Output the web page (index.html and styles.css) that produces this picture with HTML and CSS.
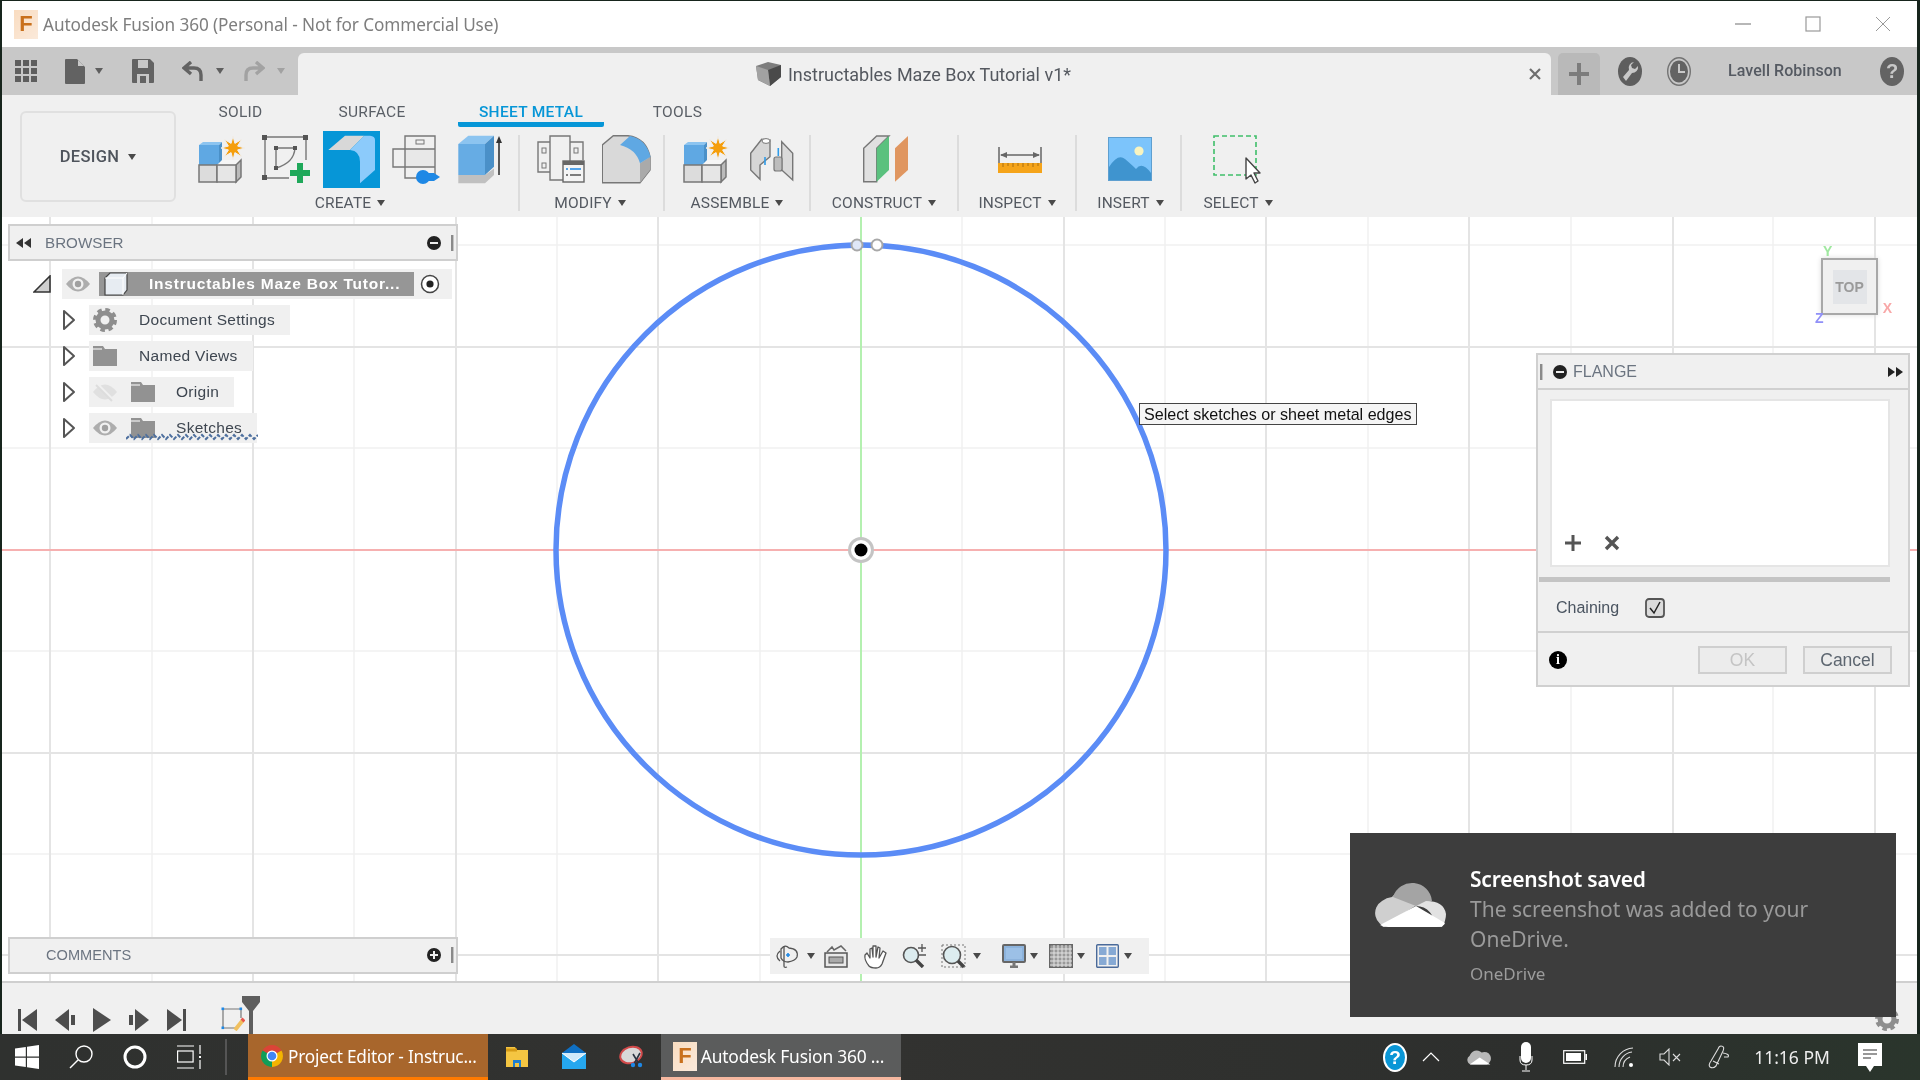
FILE: index.html
```html
<!DOCTYPE html>
<html lang="en">
<head>
<meta charset="utf-8">
<title>Autodesk Fusion 360</title>
<link rel="stylesheet" href="styles.css">
</head>
<body>
<svg class="defs" width="0" height="0">
  <defs>
    <symbol id="newcomp" viewBox="0 0 50 50">
      <polygon points="1,10 5,7 24,7 21,10" fill="#8cc4f0"/>
      <rect x="1" y="10" width="20" height="20" fill="#5fa8e3"/>
      <polygon points="21,10 24,7 24,26 21,30" fill="#4a90c8"/>
      <rect x="1" y="30" width="18" height="17" fill="#dcdcdc" stroke="#777" stroke-width="1.5"/>
      <polygon points="19,30 24,25 43,25 38,30" fill="#f6f6f6"/>
      <polygon points="38,30 43,25 43,42 38,47" fill="#bbb" stroke="#777" stroke-width="1.5"/>
      <rect x="19" y="30" width="19" height="17" fill="#e6e6e6" stroke="#777" stroke-width="1.5"/>
      <polygon points="35,1 36.9,8.4 43.5,4.5 39.6,11.1 47,13 39.6,14.9 43.5,21.5 36.9,17.6 35,25 33.1,17.6 26.5,21.5 30.4,14.9 23,13 30.4,11.1 26.5,4.5 33.1,8.4" fill="#f59e0b" stroke="#f0f0f0" stroke-width="1"/>
    </symbol>
    <symbol id="eye" viewBox="0 0 24 24">
      <path d="M0 12Q12 -3 24 12Q12 27 0 12Z" fill="#adadad"/>
      <circle cx="12" cy="12" r="5.5" fill="#f0f0f0"/>
      <circle cx="12" cy="12" r="3.2" fill="#a0a0a0"/>
    </symbol>
    <symbol id="folder" viewBox="0 0 24 24">
      <path d="M0 2H10L12 5H24V22H0Z" fill="#929292"/>
      <path d="M0 5H9" stroke="#f0f0f0" stroke-width="1.2"/>
    </symbol>
    <symbol id="gear" viewBox="0 0 24 24">
      <circle cx="12" cy="12" r="7" fill="none" stroke="#8e8e8e" stroke-width="5"/>
      <circle cx="12" cy="12" r="10" fill="none" stroke="#8e8e8e" stroke-width="4" stroke-dasharray="4.4 3.45"/>
    </symbol>
    <symbol id="tree-arrow" viewBox="0 0 14 22">
      <path d="M2 2L12 11L2 20Z" fill="#fff" stroke="#555" stroke-width="2" stroke-linejoin="round"/>
    </symbol>
  </defs>
</svg>

<div class="screen">
  <div class="app">
    <header class="titlebar">
      <span class="app-badge">F</span>
      <span class="app-title">Autodesk Fusion 360 (Personal - Not for Commercial Use)</span>
      <div class="win-controls">
        <svg width="16" height="16" viewBox="0 0 16 16"><path d="M0 8H16" stroke="#999" stroke-width="1.4"/></svg>
        <svg width="16" height="16" viewBox="0 0 16 16"><rect x="1" y="1" width="14" height="14" fill="none" stroke="#999" stroke-width="1.2"/></svg>
        <svg width="16" height="16" viewBox="0 0 16 16"><path d="M1 1L15 15M15 1L1 15" stroke="#999" stroke-width="1"/></svg>
      </div>
    </header>

    <div class="tabbar">
      <div class="qat">
        <svg width="22" height="22" viewBox="0 0 22 22" fill="#5e5e5e"><rect width="6" height="6"/><rect x="8" width="6" height="6"/><rect x="16" width="6" height="6"/><rect y="8" width="6" height="6"/><rect x="8" y="8" width="6" height="6"/><rect x="16" y="8" width="6" height="6"/><rect y="16" width="6" height="6"/><rect x="8" y="16" width="6" height="6"/><rect x="16" y="16" width="6" height="6"/></svg>
        <svg width="20" height="25" viewBox="0 0 20 25"><path d="M0 1a1 1 0 0 1 1-1H12L20 8V24a1 1 0 0 1-1 1H1a1 1 0 0 1-1-1Z" fill="#626262"/><path d="M13 1V7H19" fill="#c8c8c8"/></svg>
        <span class="caret"></span>
        <svg width="22" height="24" viewBox="0 0 22 24"><path d="M1 0H18L22 4V23a1 1 0 0 1-1 1H1a1 1 0 0 1-1-1V1a1 1 0 0 1 1-1Z" fill="#636363"/><rect x="6" y="1" width="10" height="8" fill="#c8c8c8"/><rect x="5" y="15" width="12" height="9" fill="#c8c8c8"/><rect x="8" y="17" width="6" height="7" fill="#636363"/></svg>
        <svg width="21" height="20" viewBox="0 0 21 20"><path d="M9 1L2 7L9 13M2 7H12Q19 7 19 14V20" fill="none" stroke="#636363" stroke-width="3.4"/></svg>
        <span class="caret"></span>
        <svg width="21" height="20" viewBox="0 0 21 20"><path d="M12 1L19 7L12 13M19 7H9Q2 7 2 14V20" fill="none" stroke="#a2a2a2" stroke-width="3.4"/></svg>
        <span class="caret caret-dim"></span>
      </div>
      <div class="doc-tab">
        <div class="doc-title">
          <svg width="25" height="24" viewBox="0 0 25 24"><path d="M0 4L12 0L25 3V15L14 24L2 18Z" fill="#7d7d7d"/><path d="M12 8L25 3V15L14 24Z" fill="#4a4a4a"/><path d="M0 4L12 8L14 24L2 18Z" fill="#a2a2a2"/></svg>
          <span>Instructables Maze Box Tutorial v1*</span>
        </div>
        <svg class="doc-close" width="12" height="12" viewBox="0 0 12 12"><path d="M1 1L11 11M11 1L1 11" stroke="#6e6e6e" stroke-width="2.2"/></svg>
      </div>
      <div class="plus-tab"><svg width="20" height="24" viewBox="0 0 20 24"><path d="M10 1V23M0 12H20" stroke="#7c7c7c" stroke-width="4"/></svg></div>
      <svg class="wrench" width="24" height="29" viewBox="0 0 24 29"><ellipse cx="12" cy="14.5" rx="12" ry="14.5" fill="#5e5e5e"/><path d="M16 5a6 6 0 0 0-5 8L5 20l3 4 6-8a6 6 0 0 0 6-7l-3 3-3-1-1-3 3-3Z" fill="#c8c8c8"/></svg>
      <svg class="clock" width="24" height="29" viewBox="0 0 24 29"><ellipse cx="12" cy="14.5" rx="11.3" ry="13.8" fill="none" stroke="#737373" stroke-width="1.4"/><ellipse cx="12" cy="14.5" rx="9" ry="11" fill="#636363"/><path d="M12 7V15H18" fill="none" stroke="#c8c8c8" stroke-width="2"/></svg>
      <span class="user-name">Lavell Robinson</span>
      <span class="help-badge">?</span>
    </div>

    <div class="toolbar">
      <div class="design-btn"><span>DESIGN</span><span class="caret"></span></div>
      <div class="ribbon">
        <div class="tabs">
          <span class="tab tab-solid">SOLID</span>
          <span class="tab tab-surface">SURFACE</span>
          <span class="tab tab-sheet">SHEET METAL</span>
          <span class="tab tab-tools">TOOLS</span>
        </div>
        <div class="groups">
          <section class="group group-create">
            <div class="icons icons-create">
              <svg width="50" height="50"><use href="#newcomp"/></svg>
              <svg width="50" height="50" viewBox="0 0 50 50">
                <path d="M3 43V2H44V25M3 43H27" fill="none" stroke="#777" stroke-width="1.4"/>
                <path d="M14 33V13H33Q32 28 14 33" fill="none" stroke="#777" stroke-width="1.4"/>
                <g fill="#555"><rect x="0" y="0" width="5" height="5"/><rect x="41" y="0" width="5" height="5"/><rect x="0" y="40" width="5" height="5"/><rect x="12" y="11" width="4" height="4"/><rect x="31" y="11" width="4" height="4"/><rect x="12" y="31" width="4" height="4"/></g>
                <path d="M38 28V48M28 38H48" stroke="#1fa85a" stroke-width="6"/>
              </svg>
              <svg class="active-icon" width="57" height="57" viewBox="0 0 57 57">
                <rect width="57" height="57" fill="#0696d7"/>
                <polygon points="5.3,19 22,4.7 41.3,4.7 27,19" fill="#d8d8d8"/>
                <path d="M27 19L41.3 4.7H47Q52 5 52 9V39L37 52.3V30.7Q37 20 27 19Z" fill="#8ccbfb"/>
              </svg>
              <svg width="50" height="50" viewBox="0 0 50 50">
                <rect x="13" y="14" width="30" height="18" fill="#e8e8e8"/>
                <path d="M13 1H43V43H13ZM13 14H43M13 32H43M13 14H1V32H13" fill="none" stroke="#777" stroke-width="1.4"/>
                <rect x="24" y="5" width="8" height="4" fill="none" stroke="#777" stroke-width="1"/>
                <circle cx="31" cy="42" r="7" fill="#1e88e5"/>
                <polygon points="36,38 42,38 48,42 42,46 36,46" fill="#1e88e5"/>
              </svg>
              <svg width="50" height="50" viewBox="0 0 50 50">
                <polygon points="0.3,9 10.3,0.7 36,0.7 27,9" fill="#8cc4f0"/>
                <rect x="0.3" y="9" width="27" height="31" fill="#66ace4"/>
                <polygon points="27,9 36,0.7 36,31.7 27,40" fill="#4a90c8"/>
                <polygon points="0.3,40 27,40 36,33.5 36,40 27,48.3 0.3,48.3" fill="#c0c0c0"/>
                <path d="M41 40V6" stroke="#333" stroke-width="1.6"/><polygon points="41,1 38,8 44,8" fill="#333"/>
              </svg>
            </div>
            <div class="group-label">CREATE<span class="caret"></span></div>
          </section>
          <section class="group group-modify">
            <div class="icons icons-modify">
              <svg width="50" height="50" viewBox="0 0 50 50">
                <path d="M13 1H33V45H13ZM13 7H1V37H13M33 7H46V25" fill="none" stroke="#777" stroke-width="1.4"/>
                <g fill="none" stroke="#777"><rect x="5" y="13" width="4" height="5"/><rect x="5" y="28" width="4" height="5"/><rect x="37" y="13" width="4" height="5"/></g>
                <rect x="26" y="26" width="21" height="21" fill="#f4f4f4" stroke="#666" stroke-width="1.4"/>
                <rect x="26" y="26" width="21" height="4" fill="#666"/>
                <path d="M29 34H31M33 34H44" stroke="#1e88e5" stroke-width="1.6"/><path d="M29 40H31M33 40H44" stroke="#555" stroke-width="1.4"/>
              </svg>
              <svg width="50" height="50" viewBox="0 0 50 50">
                <path d="M0.3 10L11.3 0.7H26Q44 3 48 21.7V35L38 47.7H0.3Z" fill="#d9d9d9" stroke="#777" stroke-width="1.4"/>
                <path d="M38 28.3L48 21.7V35L38 47.7Z" fill="#aaa"/>
                <path d="M18 10L28 1Q44 4 48.5 21.7L38 28.3Q34 14 18 10Z" fill="#5fa8e3"/>
              </svg>
            </div>
            <div class="group-label">MODIFY<span class="caret"></span></div>
          </section>
          <section class="group group-assemble">
            <div class="icons icons-assemble">
              <svg width="50" height="50"><use href="#newcomp"/></svg>
              <svg width="44" height="50" viewBox="0 0 44 50">
                <path d="M0.7 18.3L11.7 4.3L20 5V21.7L10 30V44.3L0.7 35Z" fill="#d6d6d6" stroke="#777" stroke-width="1.4"/>
                <ellipse cx="16" cy="6" rx="4" ry="2.4" fill="#fff" stroke="#777"/>
                <path d="M31.7 6.7L42.7 18.3V45L31.7 35Z" fill="#dadada" stroke="#777" stroke-width="1.4"/>
                <rect x="24" y="22" width="8" height="14" rx="2" fill="#bdbdbd" stroke="#777" stroke-width="1.2"/>
                <path d="M15 22V30M28.3 13V21" stroke="#2f9be8" stroke-width="1.6"/>
              </svg>
            </div>
            <div class="group-label">ASSEMBLE<span class="caret"></span></div>
          </section>
          <section class="group group-construct">
            <div class="icons icons-construct">
              <svg width="48" height="50" viewBox="0 0 48 50">
                <path d="M1.7 13.3L14.7 1H27L14.7 13.3V46.7H1.7Z" fill="#e0e0e0" stroke="#777" stroke-width="1.4"/>
                <polygon points="14.7,13.3 27,1 27,35 14.7,46.7" fill="#5ac17e"/>
                <polygon points="33,13.3 46,1 46,35 33,46.7" fill="#e09660"/>
              </svg>
            </div>
            <div class="group-label">CONSTRUCT<span class="caret"></span></div>
          </section>
          <section class="group group-inspect">
            <div class="icons icons-inspect">
              <svg width="44" height="26" viewBox="0 0 44 26">
                <path d="M1 0V16M43 0V16M3 8H41" stroke="#666" stroke-width="1.5"/>
                <polygon points="2,8 9,5 9,11" fill="#666"/><polygon points="42,8 35,5 35,11" fill="#666"/>
                <rect y="16" width="44" height="10" fill="#f5a41a"/>
                <path d="M5 16v4M10 16v3M15 16v4M20 16v3M25 16v4M30 16v3M35 16v4M40 16v3" stroke="#a86f10" stroke-width="1"/>
              </svg>
            </div>
            <div class="group-label">INSPECT<span class="caret"></span></div>
          </section>
          <section class="group group-insert">
            <div class="icons icons-insert">
              <svg width="44" height="44" viewBox="0 0 44 44">
                <rect x="0.5" y="0.5" width="43" height="43" fill="#7cc4fb" stroke="#5e9fd0"/>
                <circle cx="31" cy="14" r="4.6" fill="#f8f4c0"/>
                <path d="M1 30Q10 16 17 22T28 32Q34 24 43 36V43H1Z" fill="#3f94cf"/>
              </svg>
            </div>
            <div class="group-label">INSERT<span class="caret"></span></div>
          </section>
          <section class="group group-select">
            <div class="icons icons-select">
              <svg width="50" height="50" viewBox="0 0 50 50">
                <rect x="1" y="1" width="42" height="39" fill="none" stroke="#3fbf6a" stroke-width="1.6" stroke-dasharray="5 3"/>
                <path d="M33 23V44L38 40L42 48L45 46L41 38H47Z" fill="#fff" stroke="#444" stroke-width="1.4" stroke-linejoin="round"/>
              </svg>
            </div>
            <div class="group-label">SELECT<span class="caret"></span></div>
          </section>
        </div>
      </div>
    </div>

    <main class="canvas">
      <svg class="grid" width="1915" height="764" viewBox="2 217 1915 764">
        <g stroke="#f1f1f1" stroke-width="1.5">
          <path d="M152 217V981M354 217V981M557 217V981M760 217V981M962 217V981M1165 217V981M1368 217V981M1571 217V981M1773 217V981M2 245H1917M2 448H1917M2 651H1917M2 854H1917"/>
        </g>
        <g stroke="#e4e4e4" stroke-width="2">
          <path d="M50 217V981M253 217V981M456 217V981M658 217V981M1064 217V981M1266 217V981M1469 217V981M1673 217V981M1875 217V981M2 347H1917M2 753H1917M2 955H1917"/>
        </g>
        <path d="M2 550H1917" stroke="#f6b0b0" stroke-width="2"/>
        <path d="M861 217V981" stroke="#b4f0b0" stroke-width="2"/>
        <circle cx="861" cy="550" r="305" fill="none" stroke="#5b8cf6" stroke-width="5.5"/>
        <circle cx="857" cy="245" r="5.5" fill="#dfe7f7" stroke="#a8a8a8" stroke-width="2"/>
        <circle cx="877" cy="245" r="5.5" fill="#fff" stroke="#a8a8a8" stroke-width="2"/>
        <circle cx="861" cy="550" r="13" fill="#c4c4c4"/>
        <circle cx="861" cy="550" r="10" fill="#fff"/>
        <circle cx="861" cy="550" r="6.5" fill="#000"/>
      </svg>

      <div class="sidebar">
        <div class="panel-head browser-head">
          <svg width="15" height="10" viewBox="0 0 15 10" fill="#333"><polygon points="0,5 7,0 7,10"/><polygon points="8,5 15,0 15,10"/></svg>
          <span class="panel-title">BROWSER</span>
          <svg class="round-btn" width="14" height="14" viewBox="0 0 14 14"><circle cx="7" cy="7" r="7" fill="#222"/><rect x="3" y="6" width="8" height="2" fill="#eee"/></svg>
          <span class="grip"></span>
        </div>
        <ul class="tree">
          <li class="tree-root">
            <svg width="18" height="18" viewBox="0 0 18 18"><path d="M1 17L17 1V17Z" fill="#cfcfcf" stroke="#333" stroke-width="1.6"/></svg>
            <div class="root-node">
              <svg width="24" height="24"><use href="#eye"/></svg>
              <div class="root-bar">
                <svg width="24" height="24" viewBox="0 0 24 24"><path d="M1 6L6 1H23V18L19 23H1Z" fill="#e7ecf2" stroke="#444" stroke-width="1.2"/><path d="M19 6V23M1 6H19L23 1" fill="none" stroke="#fff" stroke-width="1"/></svg>
                <span>Instructables Maze Box Tutor...</span>
              </div>
              <svg class="radio" width="20" height="20" viewBox="0 0 20 20"><circle cx="10" cy="10" r="8.5" fill="#fff" stroke="#444" stroke-width="1.5"/><circle cx="10" cy="10" r="3.6" fill="#222"/></svg>
            </div>
          </li>
          <li class="tree-row">
            <svg class="arrow" width="14" height="22"><use href="#tree-arrow"/></svg>
            <div class="node"><svg width="24" height="24"><use href="#gear"/></svg><span>Document Settings</span></div>
          </li>
          <li class="tree-row">
            <svg class="arrow" width="14" height="22"><use href="#tree-arrow"/></svg>
            <div class="node"><svg width="24" height="24"><use href="#folder"/></svg><span>Named Views</span></div>
          </li>
          <li class="tree-row">
            <svg class="arrow" width="14" height="22"><use href="#tree-arrow"/></svg>
            <div class="node node-two">
              <svg width="24" height="24" viewBox="0 0 24 24"><path d="M0 12Q12 -3 24 12Q12 27 0 12Z" fill="#e0e0e0"/><path d="M4 4L20 20" stroke="#f0f0f0" stroke-width="3"/><path d="M3 5L19 21" stroke="#ddd" stroke-width="2"/></svg>
              <svg width="24" height="24"><use href="#folder"/></svg>
              <span>Origin</span>
            </div>
          </li>
          <li class="tree-row">
            <svg class="arrow" width="14" height="22"><use href="#tree-arrow"/></svg>
            <div class="node node-two">
              <svg width="24" height="24"><use href="#eye"/></svg>
              <svg width="24" height="24"><use href="#folder"/></svg>
              <span>Sketches</span>
              <svg class="squiggle" width="132" height="8" viewBox="0 0 132 8"><path d="M0 6L4 2L8 6L12 2L16 6L20 2L24 6L28 2L32 6L36 2L40 6L44 2L48 6L52 2L56 6L60 2L64 6L68 2L72 6L76 2L80 6L84 2L88 6L92 2L96 6L100 2L104 6L108 2L112 6L116 2L120 6L124 2L128 6L132 2" fill="none" stroke="#4d6f9e" stroke-width="2" stroke-dasharray="4 1.6"/></svg>
            </div>
          </li>
        </ul>
        <div class="panel-head comments-head">
          <span class="panel-title">COMMENTS</span>
          <svg class="round-btn" width="14" height="14" viewBox="0 0 14 14"><circle cx="7" cy="7" r="7" fill="#222"/><path d="M3 7H11M7 3V11" stroke="#eee" stroke-width="2"/></svg>
          <span class="grip"></span>
        </div>
      </div>

      <div class="viewcube">
        <span class="axis axis-y">Y</span>
        <div class="cube-face"><span>TOP</span></div>
        <span class="axis axis-z">Z</span>
        <span class="axis axis-x">X</span>
      </div>

      <div class="tooltip">Select sketches or sheet metal edges</div>

      <aside class="flange">
        <div class="flange-head">
          <span class="grip"></span>
          <svg width="14" height="14" viewBox="0 0 14 14"><circle cx="7" cy="7" r="7" fill="#222"/><rect x="3" y="6" width="8" height="2" fill="#eee"/></svg>
          <span class="panel-title">FLANGE</span>
          <svg class="flange-ff" width="15" height="10" viewBox="0 0 15 10" fill="#222"><polygon points="0,0 7,5 0,10"/><polygon points="8,0 15,5 8,10"/></svg>
        </div>
        <div class="flange-box">
          <svg width="16" height="16" viewBox="0 0 16 16"><path d="M8 0V16M0 8H16" stroke="#555" stroke-width="3"/></svg>
          <svg width="16" height="16" viewBox="0 0 16 16"><path d="M2 2L14 14M14 2L2 14" stroke="#555" stroke-width="3.4"/></svg>
        </div>
        <div class="flange-rule"></div>
        <div class="flange-row">
          <span>Chaining</span>
          <svg width="20" height="20" viewBox="0 0 20 20"><rect x="1" y="1" width="18" height="18" rx="3" fill="#dcdcdc" stroke="#555" stroke-width="1.8"/><path d="M5 10L9 15L15 4" fill="none" stroke="#222" stroke-width="1.5"/></svg>
        </div>
        <div class="flange-foot">
          <span class="info-badge">i</span>
          <button class="btn btn-off" type="button">OK</button>
          <button class="btn" type="button">Cancel</button>
        </div>
      </aside>

      <div class="navbar">
        <svg width="24" height="24" viewBox="0 0 24 24" fill="none" stroke="#555" stroke-width="1.3"><path d="M6 5Q10 0 14 4Q24 5 22 13Q20 17 13 18Q8 18 6 14Z"/><path d="M5 7Q-1 12 5 17M9 2V22Q9 24 12 23"/><path d="M11 11H15M13 9V13" stroke="#1e88e5" stroke-width="1.6"/></svg>
        <span class="caret"></span>
        <svg width="24" height="24" viewBox="0 0 24 24"><rect x="1" y="9" width="22" height="14" fill="#e8e8e8" stroke="#555" stroke-width="1.5"/><rect x="5" y="13" width="14" height="6" fill="#aaa" stroke="#555"/><path d="M3 8L8 3L10 6L17 2L22 7" fill="none" stroke="#666" stroke-width="1.5"/></svg>
        <svg width="25" height="25" viewBox="0 0 25 25"><path d="M6 22Q1 16 2 11L4 9L7 14V5L9 4L10 13V2L13 2L13 13L15 3L17 4L16 14L20 7L23 9L19 20Q17 24 13 24Q8 24 6 22Z" fill="#fff" stroke="#555" stroke-width="1.3" stroke-linejoin="round"/></svg>
        <svg width="24" height="24" viewBox="0 0 24 24"><circle cx="9" cy="11" r="7.5" fill="#dcecef" stroke="#555" stroke-width="1.6"/><path d="M14 16L21 23" stroke="#444" stroke-width="3.4"/><path d="M16 4H24M20 0V8M16 11H24" stroke="#555" stroke-width="1.3"/></svg>
        <svg width="25" height="25" viewBox="0 0 25 25"><rect x="1" y="1" width="23" height="22" fill="none" stroke="#777" stroke-dasharray="2 2"/><circle cx="11" cy="11" r="8.5" fill="#dcecef" stroke="#555" stroke-width="1.6"/><path d="M17 17L23 23" stroke="#444" stroke-width="3.4"/></svg>
        <span class="caret"></span>
        <svg width="24" height="24" viewBox="0 0 24 24"><rect x="1" y="1" width="22" height="17" rx="1" fill="#8db3dc" stroke="#666" stroke-width="2"/><rect x="4" y="4" width="16" height="11" fill="#9cc0e6"/><path d="M8 23H16M12 18V23" stroke="#777" stroke-width="3"/></svg>
        <span class="caret"></span>
        <svg width="24" height="24" viewBox="0 0 24 24"><rect x="0.7" y="0.7" width="22.6" height="22.6" fill="#999" stroke="#666" stroke-width="1.4"/><path d="M5 1V23M9 1V23M13 1V23M17 1V23M21 1V23M1 5H23M1 9H23M1 13H23M1 17H23M1 21H23" stroke="#e2e2e2"/></svg>
        <span class="caret"></span>
        <svg width="23" height="24" viewBox="0 0 23 24"><rect x="0.7" y="0.7" width="21.6" height="22.6" rx="1" fill="#f0f0f0" stroke="#4a6a9a" stroke-width="1.4"/><g fill="#86a9d4"><rect x="3" y="3" width="7.5" height="8"/><rect x="12.5" y="3" width="7.5" height="8"/><rect x="3" y="13" width="7.5" height="8"/><rect x="12.5" y="13" width="7.5" height="8"/></g></svg>
        <span class="caret"></span>
      </div>
    </main>

    <footer class="timeline">
      <div class="playback">
        <svg width="19" height="22" viewBox="0 0 19 22" fill="#4d4d4d"><rect width="3" height="22"/><polygon points="19,0 19,22 4,11"/></svg>
        <svg width="20" height="22" viewBox="0 0 20 22" fill="#4d4d4d"><polygon points="14,0 14,22 0,11"/><rect x="16" y="6" width="4" height="10"/></svg>
        <svg width="18" height="24" viewBox="0 0 18 24" fill="#4d4d4d"><polygon points="0,0 18,12 0,24"/></svg>
        <svg width="20" height="22" viewBox="0 0 20 22" fill="#4d4d4d"><rect y="6" width="4" height="10"/><polygon points="6,0 6,22 20,11"/></svg>
        <svg width="19" height="22" viewBox="0 0 19 22" fill="#4d4d4d"><polygon points="0,0 0,22 15,11"/><rect x="16" width="3" height="22"/></svg>
        <svg class="tl-sketch" width="24" height="25" viewBox="0 0 24 25"><path d="M2 3H20M2 3V22H14" fill="none" stroke="#777" stroke-width="1.2"/><path d="M20 3V12" stroke="#777" stroke-width="1.2"/><g fill="#1e88e5"><rect x="0.5" y="1.5" width="2.6" height="2.6"/><rect x="18.5" y="1.5" width="2.6" height="2.6"/><rect x="0.5" y="20.5" width="2.6" height="2.6"/></g><path d="M14 24L22 14" stroke="#f0c060" stroke-width="4"/><path d="M21 15L23 13" stroke="#e8554e" stroke-width="4"/></svg>
      </div>
      <svg class="tl-marker" width="18" height="38" viewBox="0 0 18 38"><path d="M0 0H18V6L11 15V38H7V15L0 6Z" fill="#5e5e5e"/></svg>
      <svg class="tl-gear" width="24" height="24"><use href="#gear"/></svg>
    </footer>
  </div>

  <nav class="taskbar">
    <div class="slot">
      <svg width="24" height="24" viewBox="0 0 24 24" fill="#fff"><polygon points="0,3.5 10.8,2 10.8,11.5 0,11.5"/><polygon points="12,1.8 24,0 24,11.5 12,11.5"/><polygon points="0,12.7 10.8,12.7 10.8,22 0,20.5"/><polygon points="12,12.7 24,12.7 24,24 12,22.2"/></svg>
    </div>
    <div class="slot">
      <svg width="24" height="24" viewBox="0 0 24 24" fill="none" stroke="#fff" stroke-width="1.4"><circle cx="15" cy="9" r="8"/><path d="M9 15L1 23"/></svg>
    </div>
    <div class="slot">
      <svg width="24" height="24" viewBox="0 0 24 24"><circle cx="12" cy="12" r="10" fill="none" stroke="#fff" stroke-width="3"/></svg>
    </div>
    <div class="slot">
      <svg width="24" height="24" viewBox="0 0 24 24" fill="none" stroke="#fff" stroke-width="1.2"><path d="M0 1H17M0 23H17M23 0V9M23 15V24"/><rect x="0.6" y="6" width="15.5" height="11"/><rect x="22" y="11" width="2" height="2" fill="#fff" stroke="none"/></svg>
    </div>
    <div class="slot slot-divider"><i></i></div>
    <div class="task task-chrome">
      <svg width="22" height="22" viewBox="0 0 22 22"><path d="M11 11L1.5 5.5A11 11 0 0 1 20.5 5.5Z" fill="#db4437"/><path d="M11 11L1.5 5.5A11 11 0 0 0 11 22Z" fill="#0f9d58"/><path d="M11 11L11 22A11 11 0 0 0 20.5 5.5Z" fill="#f4b400"/><circle cx="11" cy="11" r="5.5" fill="#fff"/><circle cx="11" cy="11" r="4.3" fill="#4285f4"/></svg>
      <span>Project Editor - Instruc...</span>
    </div>
    <div class="slot slot-app">
      <svg width="24" height="24" viewBox="0 0 24 24"><path d="M1 2H10L12 5H23V22H1Z" fill="#f4c542"/><path d="M1 5H12" stroke="#d69b16" stroke-width="3"/><path d="M8 15H16V22H14V18H10V22H8Z" fill="#1e7fd0"/></svg>
    </div>
    <div class="slot slot-app">
      <svg width="24" height="26" viewBox="0 0 24 26"><path d="M12 0L24 9V25H0V9Z" fill="#0f70c4"/><rect y="9" width="24" height="16" fill="#25a7ef"/><path d="M0 9L12 18L24 9" fill="#cfe9fb" stroke="#fff" stroke-width="1"/></svg>
    </div>
    <div class="slot slot-app">
      <svg width="26" height="24" viewBox="0 0 26 24"><ellipse cx="12" cy="10" rx="11" ry="8" fill="#d8d8d8" stroke="#d24a4a" stroke-width="2" transform="rotate(-18 12 10)"/><path d="M14 9L20 19M21 8L15 19" stroke="#2a3340" stroke-width="1.6"/><circle cx="14" cy="20" r="2.2" fill="#1e88e5"/><circle cx="21" cy="20" r="2.2" fill="#1e88e5"/></svg>
    </div>
    <div class="task task-fusion">
      <span class="app-badge app-badge-task">F</span>
      <span>Autodesk Fusion 360 ...</span>
    </div>
    <div class="tray">
      <span class="tray-help">?</span>
      <svg width="18" height="10" viewBox="0 0 18 10"><path d="M1 9L9 1L17 9" fill="none" stroke="#fff" stroke-width="1.2"/></svg>
      <svg width="24" height="16" viewBox="0 0 72 47"><path d="M14 46A14 14 0 0 1 8 20A22 22 0 0 1 44 10A18 18 0 0 1 60 46Z" fill="#b8b8b8"/><path d="M8 46L38 25L70 46Z" fill="#fff"/></svg>
      <svg width="14" height="30" viewBox="0 0 14 30"><rect x="2" y="0" width="10" height="21" rx="5" fill="#fff"/><path d="M1 14V18Q1 23 7 23Q13 23 13 18V14M7 23V28M3 29H11" fill="none" stroke="#fff" stroke-width="1"/></svg>
      <svg width="24" height="14" viewBox="0 0 24 14"><rect x="0.7" y="0.7" width="21" height="12.6" fill="none" stroke="#fff" stroke-width="1.2"/><rect x="3" y="3" width="15" height="8" fill="#fff"/><rect x="22.4" y="4" width="1.6" height="6" fill="#fff"/></svg>
      <svg width="20" height="20" viewBox="0 0 20 20" fill="none" stroke="#ddd" stroke-width="1.1"><path d="M1 20A19 19 0 0 1 19 1M5 20A15 15 0 0 1 18 5M9 20A11 11 0 0 1 16 10"/><circle cx="17" cy="18" r="2" fill="#fff" stroke="none"/></svg>
      <svg width="22" height="18" viewBox="0 0 22 18" fill="none" stroke="#ddd" stroke-width="1.1"><path d="M1 6H5L10 1V17L5 12H1Z"/><path d="M14 6L21 13M21 6L14 13"/></svg>
      <svg width="22" height="24" viewBox="0 0 22 24" fill="none" stroke="#ddd" stroke-width="1.1"><path d="M13 1Q17 1 15 6L8 21Q5 24 2 22Q0 20 3 16L10 4Q11 1 13 1ZM15 8Q22 9 20 12L16 12M5 16L11 19"/></svg>
      <span class="tray-time">11:16 PM</span>
      <svg width="24" height="29" viewBox="0 0 24 29"><path d="M0 0H24V23H16L12 29L8 23H0Z" fill="#fff"/><path d="M5 7H19M5 11H19M5 15H13" stroke="#333" stroke-width="1.2"/></svg>
    </div>
  </nav>

  <div class="toast">
    <svg class="toast-cloud" width="72" height="47" viewBox="0 0 72 47"><path d="M14 46A14 14 0 0 1 8 20A22 22 0 0 1 18 16A22 22 0 0 1 44 10L46 22L8 46Z" fill="#cfcfcf"/><path d="M19 16A20 20 0 0 1 58 20L42 25Z" fill="#a4a4a4"/><path d="M42 25A18 18 0 0 1 60 46H68Q72 40 72 33Q70 20 52 20Z" fill="#e2e2e2"/><path d="M6 44L42 25L71 42Q70 46 62 46H14Q9 46 6 44Z" fill="#fff"/></svg>
    <div class="toast-text">
      <div class="toast-title">Screenshot saved</div>
      <div class="toast-body">The screenshot was added to your OneDrive.</div>
      <div class="toast-source">OneDrive</div>
    </div>
  </div>
</div>
</body>
</html>
```

FILE: styles.css
```css
* { box-sizing: border-box; }
html, body { margin: 0; padding: 0; width: 1920px; height: 1080px; overflow: hidden; }
body { font-family: "Roboto", "Liberation Sans", sans-serif; }
.defs { position: absolute; }
svg { display: block; flex: none; }

.screen { position: relative; width: 1920px; height: 1080px; background: #17251d; }
.app { display: flex; flex-direction: column; width: 1915px; height: 1033px; margin: 0 3px 0 2px; position: relative; top: 1px; filter: blur(0.55px); }

/* title bar */
.titlebar { height: 46px; flex: none; background: #fff; display: flex; align-items: center; padding-left: 12px; }
.app-badge { width: 24px; height: 29px; flex: none; display: flex; align-items: center; justify-content: center; background: linear-gradient(135deg, #f9dcc0, #fbeadb); color: #c9701c; font: 700 22px "Liberation Sans", sans-serif; }
.app-title { margin-left: 5px; font: 400 17.2px "Noto Sans", sans-serif; color: #7e7e7e; letter-spacing: -0.1px; }
.win-controls { margin-left: auto; display: flex; align-items: center; gap: 54px; padding-right: 26px; margin-top: -1px; }

/* document tab bar */
.tabbar { height: 48px; flex: none; background: #c8c8c8; display: flex; align-items: flex-start; }
.qat { width: 296px; height: 48px; padding-left: 13px; display: grid; grid-template-columns: 50px 30px 37px 50px 34px 28px 33px 10px; align-items: center; }
.caret { display: inline-block; width: 0; height: 0; border: 4.5px solid transparent; border-top: 6px solid #4a4a4a; border-bottom: 0; vertical-align: middle; }
.qat .caret { border-top-color: #5e5e5e; }
.qat .caret-dim { border-top-color: #a2a2a2; }
.doc-tab { width: 1253px; height: 42px; margin-top: 6px; background: #f0f0f0; border-radius: 6px 6px 0 0; display: flex; align-items: center; }
.doc-title { flex: 1; display: flex; align-items: center; justify-content: center; gap: 7px; font: 400 18px "Roboto", sans-serif; color: #54585f; }
.doc-close { margin-right: 10px; }
.plus-tab { width: 42px; height: 42px; margin: 6px 0 0 7px; background: #b9b9b9; border-radius: 5px 5px 0 0; display: flex; align-items: center; justify-content: center; }
.wrench { margin: 10px 0 0 18px; }
.clock { margin: 10px 0 0 25px; }
.user-name { margin: 0 0 0 37px; width: 113px; font: 500 16px/48px "Roboto", sans-serif; letter-spacing: 0.05px; color: #555a62; white-space: nowrap; }
.help-badge { width: 24px; height: 29px; margin: 10px 0 0 39px; border-radius: 50%; background: #636363; color: #c8c8c8; font: 700 20px/29px "Liberation Sans", sans-serif; text-align: center; }

/* toolbar */
.toolbar { height: 122px; flex: none; background: #f0f0f0; display: flex; padding-left: 18px; }
.design-btn { width: 156px; height: 91px; margin-top: 16px; border: 2px solid #e0e0e0; border-radius: 6px; display: flex; align-items: center; justify-content: center; gap: 9px; font: 500 16.5px "Roboto", sans-serif; letter-spacing: 0.3px; color: #4f545c; }
.ribbon { margin-left: 6px; display: flex; flex-direction: column; }
.tabs { height: 40px; display: flex; padding-left: 16px; font: 400 15.5px "Roboto", sans-serif; color: #5a5f66; }
.tab { height: 32px; padding-top: 8px; text-align: center; letter-spacing: 0.3px; white-space: nowrap; }
.tab-solid { width: 85px; margin-right: 34px; }
.tab-surface { width: 110px; margin-right: 31px; }
.tab-sheet { width: 146px; margin-right: 27px; color: #0696d7; font-weight: 500; border-bottom: 5px solid #0696d7; border-radius: 0 0 2px 2px; }
.tab-tools { width: 93px; }
.groups { display: flex; height: 76px; }
.group { display: flex; flex-direction: column; border-right: 2px solid #dcdcdc; }
.group-create { width: 338px; }
.group-modify { width: 145px; }
.group-assemble { width: 146px; }
.group-construct { width: 148px; }
.group-inspect { width: 118px; }
.group-insert { width: 105px; }
.group-select { width: 112px; border-right: 0; }
.icons { height: 60px; display: grid; align-items: start; }
.icons-create { padding-left: 16px; grid-template-columns: 64px 61px 69px 66px 50px; }
.active-icon { margin-top: -4px; }
.icons-modify { padding-left: 17px; grid-template-columns: 65px 50px; }
.icons-assemble { padding-left: 18px; grid-template-columns: 67px 44px; }
.icons-construct { padding-left: 51px; }
.icons-inspect { padding: 12px 0 0 39px; }
.icons-insert { padding: 2px 0 0 31px; }
.icons-select { padding-left: 31px; }
.group-label { height: 16px; display: flex; align-items: center; justify-content: center; gap: 6px; font: 400 15.5px "Roboto", sans-serif; color: #545961; letter-spacing: 0.15px; white-space: nowrap; }
.group-modify .group-label { padding-right: 3px; }
.group-insert .group-label { padding-left: 4px; }

/* canvas */
.canvas { flex: 1; position: relative; background: #fff; overflow: hidden; }
.grid { position: absolute; left: 0; top: 0; }

.sidebar { position: absolute; left: 6px; top: 7px; bottom: 7px; width: 450px; display: flex; flex-direction: column; }
.panel-head { height: 37px; flex: none; display: flex; align-items: center; background: #f0f0f0; border: 2px solid #cfcfcf; }
.browser-head { padding-left: 6px; }
.comments-head { margin-top: auto; padding-left: 36px; padding-bottom: 2px; }
.panel-title { font: 400 15.2px "Liberation Sans", sans-serif; color: #6b7480; white-space: nowrap; }
.comments-head .panel-title { font-size: 14.6px; }
.browser-head .panel-title { margin-left: 14px; }
.round-btn { margin-left: auto; }
.grip { width: 3px; height: 16px; flex: none; margin: 0 2px 0 10px; border-left: 2px solid #8a8a8a; border-right: 1px solid #c4c4c4; }
.tree { list-style: none; margin: 8px 0 0; padding: 0; display: flex; flex-direction: column; gap: 6px; font: 400 15.5px "Liberation Sans", sans-serif; color: #3e4650; }
.tree-root { display: flex; align-items: center; padding-left: 25px; height: 30px; }
.root-node { margin-left: 11px; width: 390px; height: 30px; background: #f0f0f0; display: flex; align-items: center; padding-left: 4px; }
.root-bar { margin-left: 9px; width: 315px; height: 24px; background: #969696; display: flex; align-items: center; padding-left: 5px; gap: 21px; color: #fff; font-weight: 700; letter-spacing: 0.78px; white-space: nowrap; overflow: hidden; }
.radio { margin-left: 6px; }
.tree-row { display: flex; align-items: center; height: 30px; padding-left: 54px; }
.node { position: relative; margin-left: 13px; height: 30px; background: #f0f0f0; display: flex; align-items: center; padding: 0 15px 0 4px; gap: 22px; white-space: nowrap; letter-spacing: 0.3px; }
.node-two { gap: 14px; }
.node-two span { margin-left: 7px; }
.squiggle { position: absolute; left: 37px; bottom: 2px; }

.viewcube { position: absolute; left: 1819px; top: 41px; width: 57px; height: 57px; border: 2px solid #a8a8a8; background: #f0f0f0; display: flex; align-items: center; justify-content: center; box-shadow: 0 0 5px #ddd; }
.cube-face { width: 34px; height: 34px; background: #e3e5e8; color: #9a9a9a; font: 700 14px/34px "Liberation Sans", sans-serif; text-align: center; }
.axis { position: absolute; font: 700 14px "Liberation Sans", sans-serif; }
.axis-y { left: 0; top: -17px; color: #a0e8a0; }
.axis-z { left: -8px; bottom: -13px; color: #9090f8; }
.axis-x { right: -16px; bottom: -3px; color: #f8a8a8; }

.tooltip { position: absolute; left: 1137px; top: 186px; width: 278px; height: 22px; background: #f5f5f5; border: 1px solid #444; font: 400 16.1px/20px "Liberation Sans", sans-serif; color: #111; padding-left: 4px; white-space: nowrap; }

.flange { position: absolute; left: 1534px; top: 136px; width: 374px; height: 334px; background: #f0f0f0; border: 2px solid #d0d0d0; display: flex; flex-direction: column; font: 400 16px "Liberation Sans", sans-serif; color: #4a5460; }
.flange-head { height: 35px; flex: none; display: flex; align-items: center; border-bottom: 2px solid #d0d0d0; position: relative; }
.flange-head .grip { margin: 0 10px 0 2px; }
.flange-head .panel-title { margin-left: 6px; font-size: 16px; }
.flange-ff { margin-left: auto; margin-right: 5px; }
.flange-box { width: 340px; height: 168px; margin: 9px 0 0 12px; flex: none; background: #fff; border: 2px solid #e5e5e5; display: flex; align-items: flex-end; gap: 23px; padding: 0 0 14px 13px; }
.flange-rule { width: 351px; height: 5px; margin: 10px 0 0 1px; background: #c4c4c4; flex: none; }
.flange-row { height: 51px; flex: none; display: flex; align-items: center; padding: 3px 0 0 18px; gap: 26px; border-bottom: 2px solid #d0d0d0; }
.flange-foot { flex: 1; display: flex; align-items: flex-start; padding-top: 13px; }
.info-badge { width: 18px; height: 18px; margin: 5px 0 0 11px; border-radius: 50%; background: #000; color: #fff; font: 700 14px/18px "Liberation Serif", serif; text-align: center; }
.btn { width: 89px; height: 28px; padding: 0; background: #ececec; border: 2px solid #cfcfcf; font: 400 17.5px/24px "Liberation Sans", sans-serif; color: #5d6670; margin-left: 16px; }
.btn-off { margin-left: 131px; color: #c4c4c4; }

.navbar { position: absolute; left: 768px; top: 721px; width: 379px; height: 36px; padding-left: 5px; background: #f0f0f0; display: grid; grid-template-columns: 32px 17px 39px 39px 39px 32px 29px 28px 19px 28px 19px 28px 8px; align-items: center; }

/* timeline */
.timeline { height: 53px; flex: none; position: relative; overflow: hidden; background: #f0f0f0; border-top: 2px solid #cfcfcf; }
.playback { display: flex; align-items: center; gap: 18px; padding: 25px 0 0 16px; }
.tl-sketch { margin: -4px 0 0 17px; }
.tl-marker { position: absolute; left: 240px; top: 13px; }
.tl-gear { position: absolute; left: 1873px; top: 24px; }

/* taskbar */
.taskbar { position: absolute; left: 0; top: 1034px; width: 1920px; height: 46px; background: linear-gradient(90deg, #2f312f, #323230 45%, #2d2f2d 80%, #2a352c); display: flex; color: #fff; filter: blur(0.3px); }
.slot { width: 54px; height: 46px; flex: none; display: flex; align-items: center; justify-content: center; }
.slot-divider { width: 32px; justify-content: flex-start; padding-left: 9px; }
.slot-divider i { width: 2px; height: 36px; background: #555; }
.slot-app { width: 57.6px; }
.task { width: 240px; height: 46px; flex: none; display: flex; align-items: center; padding-top: 1px; font: 400 17.4px "Noto Sans", sans-serif; white-space: nowrap; }
.task-chrome { background: #a8662c; border-bottom: 3px solid #ff7a00; padding-left: 13px; gap: 5px; font-size: 17.2px; letter-spacing: -0.2px; }
.task-fusion { background: #5b5c5c; border-bottom: 3px solid #f6b8a0; padding-left: 12px; gap: 4px; letter-spacing: -0.2px; }
.app-badge-task { width: 24px; height: 29px; }
.tray { margin-left: auto; width: 545px; padding-right: 27px; height: 46px; display: grid; grid-template-columns: 40px 32px 64px 30px 68px 30px 62px 36px 110px 46px; justify-items: center; align-items: center; }
.tray-help { width: 24px; height: 29px; border-radius: 50%; background: #0a96d6; border: 2px solid #fff; color: #fff; font: 700 19px/25px "Liberation Sans", sans-serif; text-align: center; }
.tray-time { font: 400 17.5px "Noto Sans", sans-serif; color: #eee; white-space: nowrap; }

/* notification */
.toast { position: absolute; left: 1350px; top: 833px; width: 546px; height: 184px; background: #3d3d3d; display: flex; padding-left: 24px; font-family: "Noto Sans", sans-serif; filter: blur(0.25px); }
.toast-cloud { margin-top: 48px; }
.toast-text { margin-left: 24px; padding-top: 31px; width: 390px; }
.toast-title { font-size: 21px; font-weight: 600; line-height: 30px; color: #fff; letter-spacing: -0.2px; }
.toast-body { font-size: 21px; line-height: 30px; color: #9a9a9a; width: 360px; }
.toast-source { margin-top: 8px; font-size: 17px; line-height: 24px; color: #9c9c9c; }
```
